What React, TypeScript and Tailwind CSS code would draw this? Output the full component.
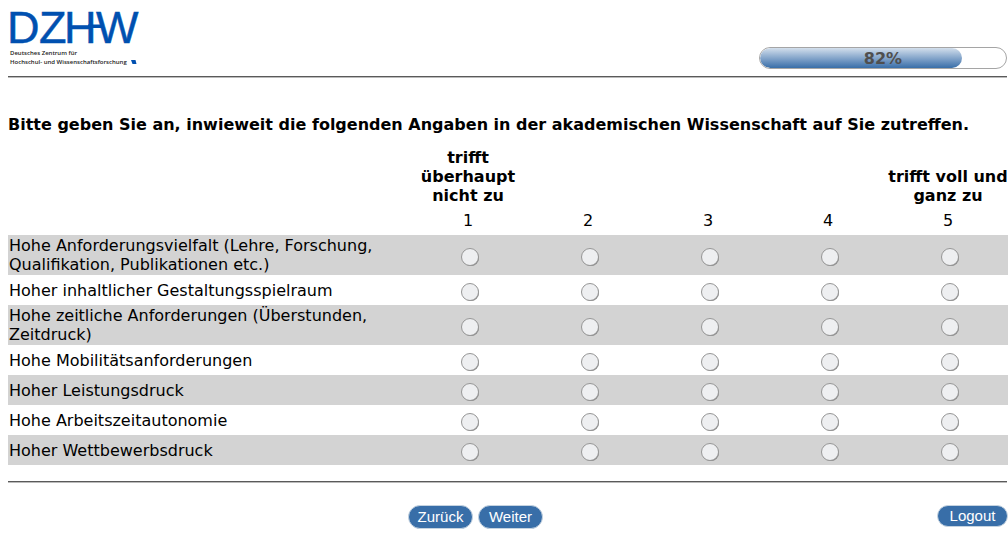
const scale = [
  { value: 1, lines: ['trifft', 'überhaupt', 'nicht zu'] },
  { value: 2, lines: [] },
  { value: 3, lines: [] },
  { value: 4, lines: [] },
  { value: 5, lines: ['trifft voll und', 'ganz zu'] },
];

const items = [
  'Hohe Anforderungsvielfalt (Lehre, Forschung, Qualifikation, Publikationen etc.)',
  'Hoher inhaltlicher Gestaltungsspielraum',
  'Hohe zeitliche Anforderungen (Überstunden, Zeitdruck)',
  'Hohe Mobilitätsanforderungen',
  'Hoher Leistungsdruck',
  'Hohe Arbeitszeitautonomie',
  'Hoher Wettbewerbsdruck',
];

function Logo() {
  return (
    <svg viewBox="0 0 140 64" className="h-16 w-[140px] overflow-visible" role="img" aria-label="DZHW">
      <g
        fill="#0050b0"
        stroke="#0050b0"
        strokeWidth="0.5"
        fontFamily="'Liberation Sans', sans-serif"
        fontSize="45"
      >
        <text x="-1" y="35">D</text>
        <text x="31" y="35">Z</text>
        <text x="56" y="35">H</text>
        <text x="88" y="35">W</text>
      </g>
      <path d="M80 16.5H95V20H80Z" fill="#0050b0" />
      <g fill="#222" fontFamily="'Open Sans', sans-serif" fontSize="6" fontWeight="600">
        <text x="2" y="47">Deutsches Zentrum für</text>
        <text x="2" y="56">Hochschul- und Wissenschaftsforschung</text>
      </g>
      <path d="M123 52H127.5L128.5 56H124.5Z" fill="#0050b0" />
    </svg>
  );
}

function Progress({ value }: { value: number }) {
  return (
    <div
      role="progressbar"
      aria-label="Fortschritt"
      aria-valuenow={value}
      className="relative h-[22px] w-[248px] overflow-hidden rounded-full border border-[#a5a5a5] bg-white"
    >
      <div
        className="h-full rounded-full bg-linear-to-b from-[#d3dfec] to-[#386ea8]"
        style={{ width: `${value}%` }}
      />
      <span className="absolute inset-0 text-center font-bold leading-[22px] text-[#4f4f4f]">{value}%</span>
    </div>
  );
}

const button =
  'rounded-full border border-[#c5d3e0] bg-[#386ea8] font-["Liberation_Sans",sans-serif] text-[15px] leading-5 text-white';

export default function App() {
  return (
    <form
      className='pl-2 font-["DejaVu_Sans",sans-serif] text-base leading-[19px] text-black'
      onSubmit={(e) => e.preventDefault()}
    >
      <header className="mr-px flex items-end justify-between border-b border-[#5a5a5a] pt-2 pb-1 shadow-[0_1px_0_#bbb]">
        <Logo />
        <div className="pb-[3px]">
          <Progress value={82} />
        </div>
      </header>
      <main className="pt-[38px]">
        <h1 id="question" className="font-bold">
          Bitte geben Sie an, inwieweit die folgenden Angaben in der akademischen Wissenschaft auf Sie zutreffen.
        </h1>
        <table aria-labelledby="question" className="mt-3 w-full table-fixed border-collapse">
          <colgroup>
            <col className="w-2/5" />
            {scale.map((s) => (
              <col key={s.value} />
            ))}
          </colgroup>
          <thead>
            <tr>
              <td />
              {scale.map((s) => (
                <th key={s.value} scope="col" className="px-0 pt-0.5 pb-0.5 align-bottom">
                  {s.lines.map((line) => (
                    <span key={line} className="block whitespace-nowrap">
                      {line}
                    </span>
                  ))}
                </th>
              ))}
            </tr>
            <tr className="h-7 text-center">
              <td />
              {scale.map((s) => (
                <td key={s.value} className="pb-0.5">
                  {s.value}
                </td>
              ))}
            </tr>
          </thead>
          <tbody>
            {items.map((item, row) => (
              <tr key={item} className="h-[30px] odd:bg-[#d3d3d3]">
                <th scope="row" className="p-px text-left font-normal">
                  {item}
                </th>
                {scale.map((s) => (
                  <td key={s.value} className="pt-1 pl-1">
                    <input
                      type="radio"
                      name={`item-${row}`}
                      value={s.value}
                      aria-label={`${item}: ${s.value}`}
                      className="mx-auto block size-[18px] appearance-none rounded-full border border-[#969696] bg-[#eeeff1] shadow-[1px_1px_0_-1px_#888] checked:bg-[#386ea8]"
                    />
                  </td>
                ))}
              </tr>
            ))}
          </tbody>
        </table>
      </main>
      <footer className="mt-4 mr-px border-t border-[#5a5a5a] pt-[23px] shadow-[inset_0_1px_0_#bbb]">
        <div className="-mr-px grid grid-cols-[2fr_3fr]">
          <div className="col-start-2 flex items-start justify-between">
            <div className="flex gap-[5px]">
              <button type="button" className={`${button} h-6 w-[65px]`}>Zurück</button>
              <button type="submit" className={`${button} h-6 w-[65px]`}>Weiter</button>
            </div>
            <button type="button" className={`${button} h-[22px] w-[71px]`}>Logout</button>
          </div>
        </div>
      </footer>
    </form>
  );
}
